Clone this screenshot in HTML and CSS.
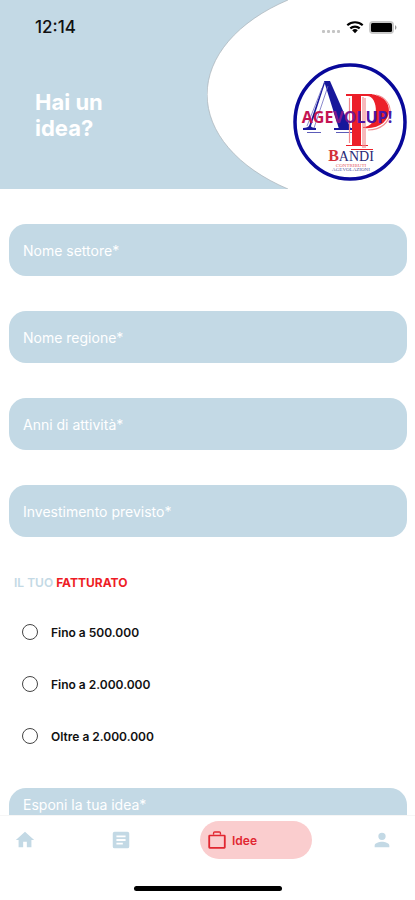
FILE: index.html
```html
<!DOCTYPE html>
<html lang="it">
<head>
<meta charset="utf-8">
<meta name="viewport" content="width=device-width, initial-scale=1">
<title>Hai un idea?</title>
<link rel="stylesheet" href="styles.css">
</head>
<body>
<div class="app">
  <header class="header">
    <svg class="curve" viewBox="0 0 208 189" aria-hidden="true"><path d="M81 0A188 115 0 0 0 81 189H208V0Z" fill="#fff"/><path d="M81 0A188 115 0 0 0 81 189" fill="none" stroke="#a9b2b8" stroke-width="0.7"/></svg>
    <div class="status">
      <time class="clock">12:14</time>
      <svg class="signals" viewBox="0 0 78 16" aria-hidden="true">
        <g fill="#c4c4c4"><rect x="1" y="11" width="3" height="3" rx="1"/><rect x="6" y="11" width="3" height="3" rx="1"/><rect x="11" y="11" width="3" height="3" rx="1"/><rect x="16" y="11" width="3" height="3" rx="1"/></g>
        <g fill="none" stroke="#000" stroke-width="2.2"><path d="M26.300 6.200a11.500 11.500 0 0 1 15.400 0"/><path d="M29.300 9.400a7 7 0 0 1 9.400 0"/></g>
        <path d="M31.200 11.300a4 4 0 0 1 5.600 0L34 14.300Z"/>
        <rect x="48" y="2" width="25" height="13" rx="4" fill="#c9c9c9"/><rect x="50" y="4" width="21" height="9" rx="1.500"/><path d="M74 6q3 2.500 0 5z" fill="#999"/>
      </svg>
    </div>
    <div class="hero">
      <h1 class="title">Hai un<br>idea?</h1>
      <svg class="logo" viewBox="0 0 114 118" role="img" aria-label="Agevolup Bandi">
        <ellipse cx="57" cy="59" rx="55" ry="57" fill="#fff" stroke="#08089a" stroke-width="3.500"/>
        <g fill="#17179b">
          <path d="M31 18h6L58 66H46Z"/>
          <path d="M32 20 17 66h-2L31 19Z"/>
          <path d="M10 65q5 0 7-3 1 3 6 3v2H10zM41 65h20v2H41z"/>
          <path d="M14 69h14v1H14zM43 69h17v1H43z" opacity=".7"/>
        </g>
        <path d="M35 23 21 65M29 25 14 63" fill="none" stroke="#6d6bc0" stroke-width="0.800"/>
        <g fill="#ec1f29">
          <path d="M53 31h26v2H53zM59 33h9v50h-9zM53 82h22v1H53zM58 86h22v1H58z"/>
          <path d="M74 31C104 29 104 68 70 65V64C87 64 86 33 74 33Z"/>
        </g>
        <g fill="none" stroke="#f28b8f" stroke-width="1.200"><path d="M56.500 35v45M70 34v51M72 35v50M83 32c20 4 20 34-8 35"/></g>
        <text x="54" y="60" class="mark" text-anchor="middle"><tspan fill="#c31352">AGE</tspan><tspan fill="#7c178c">VO</tspan><tspan fill="#4a16a8">LUP!</tspan></text>
        <text x="58" y="98" class="bandi" text-anchor="middle"><tspan fill="#d33139" class="bandi-first">B</tspan><tspan fill="#292977">ANDI</tspan></text>
        <text x="58" y="104" class="small" fill="#e45c62" text-anchor="middle">CONTRIBUTI</text>
        <text x="58" y="108" class="small" fill="#56569c" text-anchor="middle">AGEVOLAZIONI</text>
      </svg>
    </div>
  </header>

  <main class="content">
    <form class="form">
      <input class="field" type="text" placeholder="Nome settore*" aria-label="Nome settore">
      <input class="field" type="text" placeholder="Nome regione*" aria-label="Nome regione">
      <input class="field" type="text" placeholder="Anni di attività*" aria-label="Anni di attività">
      <input class="field" type="text" placeholder="Investimento previsto*" aria-label="Investimento previsto">
      <div class="group">
        <fieldset class="revenue">
          <legend class="legend">IL TUO <strong>FATTURATO</strong></legend>
          <label class="option"><input type="radio" name="fatturato">Fino a 500.000</label>
          <label class="option"><input type="radio" name="fatturato">Fino a 2.000.000</label>
          <label class="option"><input type="radio" name="fatturato">Oltre a 2.000.000</label>
        </fieldset>
        <textarea class="field idea" placeholder="Esponi la tua idea*" aria-label="Esponi la tua idea"></textarea>
      </div>
    </form>
  </main>

  <footer class="footer">
    <nav class="tabs">
      <a class="tab" href="#home" aria-label="Home"><svg viewBox="0 0 24 24"><path d="M10 20v-6h4v6h5v-8h3L12 3 2 12h3v8z"/></svg></a>
      <a class="tab" href="#bandi" aria-label="Bandi"><svg viewBox="0 0 24 24"><path d="M19 3H5a2 2 0 0 0-2 2v14a2 2 0 0 0 2 2h14a2 2 0 0 0 2-2V5a2 2 0 0 0-2-2zm-5 14H7v-2h7zm3-4H7v-2h10zm0-4H7V7h10z"/></svg></a>
      <a class="tab active" href="#idee" aria-current="page"><svg viewBox="0 0 24 24"><path d="M15 6V4H9v2H7.500V4.500a2 2 0 0 1 2-2h5a2 2 0 0 1 2 2V6zM4.500 8v11.500h15V8zM20 6.300a1.500 1.500 0 0 1 1.500 1.500V20a1.500 1.500 0 0 1-1.500 1.500H4A1.500 1.500 0 0 1 2.500 20V7.800A1.500 1.500 0 0 1 4 6.300z" fill-rule="evenodd"/></svg>Idee</a>
      <a class="tab" href="#profilo" aria-label="Profilo"><svg viewBox="0 0 24 24"><path d="M12 12a4 4 0 1 0 0-8 4 4 0 0 0 0 8zm0 2c-2.700 0-8 1.300-8 4v2h16v-2c0-2.700-5.300-4-8-4z"/></svg></a>
    </nav>
    <div class="home-bar"></div>
  </footer>
</div>
</body>
</html>
```
FILE: styles.css
```css
* {
  box-sizing: border-box;
}

body {
  margin: 0;
  background: #fff;
  color: #111;
  font-family: Inter, "Liberation Sans", sans-serif;
}

.app {
  display: flex;
  flex-direction: column;
  height: 100vh;
}

.header {
  position: relative;
  flex: none;
  background: #c3d9e5;
  padding-bottom: 8px;
}

.curve {
  position: absolute;
  top: 0;
  right: 0;
  height: 100%;
}

.status,
.hero {
  position: relative;
  display: flex;
  justify-content: space-between;
}

.status {
  align-items: center;
  height: 54px;
  padding: 0 16px 0 35px;
}

.clock {
  font-size: 17px;
  font-weight: 500;
}

.signals {
  width: 78px;
  height: 16px;
}

.hero {
  align-items: flex-start;
  padding: 9px 8px 0 35px;
}

.title {
  margin: 26px 0 0;
  color: #fff;
  font-size: 22px;
  line-height: 26px;
  font-weight: 700;
}

.logo {
  width: 114px;
  height: 118px;
}

.mark {
  font: 700 16px "Open Sans", sans-serif;
}

.bandi {
  font: 14px "Liberation Serif", serif;
}

.bandi-first {
  font-size: 16px;
  font-weight: 700;
}

.small {
  font: 5px "Liberation Serif", serif;
}

.content {
  flex: 1;
  min-height: 0;
  overflow-y: auto;
  scrollbar-width: none;
}

.form {
  display: flex;
  flex-direction: column;
  gap: 35px;
  padding: 35px 8px 35px 9px;
}

.field {
  width: 100%;
  height: 52px;
  padding: 0 14px;
  border: 0;
  border-radius: 17px;
  background: #c3d9e5;
  color: #fff;
  font: 14px Inter, sans-serif;
}

.field::placeholder {
  color: #fff;
  opacity: 1;
}

.group {
  display: flex;
  flex-direction: column;
  gap: 26px;
}

.idea {
  height: 120px;
  padding-top: 8px;
  resize: none;
}

.revenue {
  margin: 0;
  padding: 0 5px;
  border: 0;
}

.legend {
  padding: 0;
  margin-bottom: 12px;
  color: #c3d9e5;
  font-size: 12px;
  line-height: 22px;
  font-weight: 600;
}

.legend strong {
  color: #ee1c25;
  font-weight: 700;
}

.option {
  display: flex;
  align-items: center;
  gap: 13px;
  height: 52px;
  padding-left: 8px;
  font-size: 12px;
  font-weight: 600;
}

.option input {
  appearance: none;
  width: 16px;
  height: 16px;
  margin: 0;
  border: 1px solid #444;
  border-radius: 50%;
}

.option input:checked {
  border-width: 5px;
}

.footer {
  flex: none;
  background: #fff;
  border-top: 1px solid #f6f6f6;
}

.tabs {
  display: grid;
  grid-template-columns: 96fr 90fr 171fr 22px;
  align-items: center;
  height: 48px;
  padding: 0 22px 0 14px;
}

.tab {
  display: flex;
  align-items: center;
  color: #c3d9e5;
  text-decoration: none;
}

.tab svg {
  width: 22px;
  height: 22px;
  fill: currentColor;
}

.active {
  gap: 4px;
  width: 112px;
  height: 38px;
  padding-left: 6px;
  border-radius: 19px;
  background: #facdce;
  color: #e12630;
  font-size: 12px;
  font-weight: 600;
}

.home-bar {
  width: 148px;
  height: 5px;
  margin: 22px auto 9px;
  border-radius: 3px;
  background: #000;
}
```
